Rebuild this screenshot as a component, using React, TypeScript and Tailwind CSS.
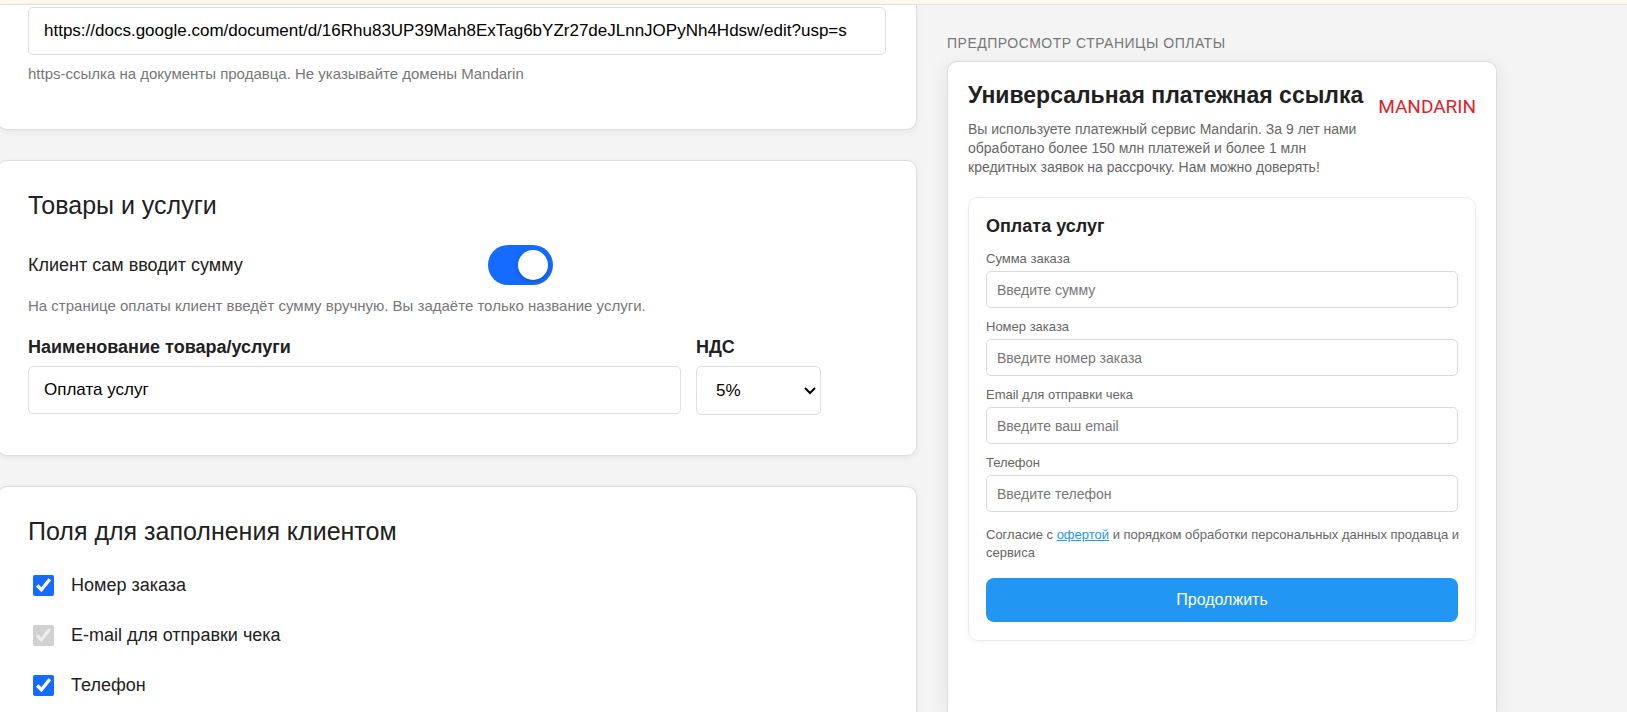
import { useState } from "react";
import type { ReactNode } from "react";

const clientFields = [
  { id: "order", label: "Номер заказа", disabled: false },
  { id: "email", label: "E-mail для отправки чека", disabled: true },
  { id: "phone", label: "Телефон", disabled: false },
];

const previewFields = [
  { id: "p-sum", label: "Сумма заказа", placeholder: "Введите сумму" },
  { id: "p-order", label: "Номер заказа", placeholder: "Введите номер заказа" },
  { id: "p-email", label: "Email для отправки чека", placeholder: "Введите ваш email" },
  { id: "p-phone", label: "Телефон", placeholder: "Введите телефон" },
];

const inputClass =
  "block h-12 w-full rounded-[5px] border border-[#dedede] bg-white px-[15px] text-[17px] text-black outline-none";

function Section({ title, className, children }: { title: string; className?: string; children: ReactNode }) {
  return (
    <section
      className={`border border-[#dedede] bg-white px-[30px] pt-[30px] shadow-[0_2px_6px_rgba(0,0,0,0.06)] ${className || ""}`}
    >
      <h2 className="text-[25px] leading-7">{title}</h2>
      {children}
    </section>
  );
}

export default function App() {
  const [docUrl, setDocUrl] = useState(
    "https://docs.google.com/document/d/16Rhu83UP39Mah8ExTag6bYZr27deJLnnJOPyNh4Hdsw/edit?usp=s",
  );
  const [itemName, setItemName] = useState("Оплата услуг");
  const [vat, setVat] = useState("5%");
  const [customSum, setCustomSum] = useState(true);

  return (
    <div className="flex min-h-screen flex-col overflow-hidden bg-[#f4f4f4] font-['Liberation_Sans',Arial,sans-serif] text-[#212121]">
      <header className="h-[5px] border-b border-[#f6dccf] bg-[#fff7f2]" />

      <main className="-ml-[3px] flex flex-1 gap-[30px] pr-[130px]">
        {/* Settings */}
        <div className="flex min-w-0 flex-1 flex-col gap-[30px]">
          <section className="rounded-b-[10px] border border-t-0 border-[#dedede] bg-white px-[30px] pt-[2px] pb-[45px] shadow-[0_2px_6px_rgba(0,0,0,0.06)]">
            <input
              aria-label="Ссылка на документы"
              className={inputClass}
              value={docUrl}
              onChange={(e) => setDocUrl(e.target.value)}
            />
            <p className="mt-[9px] text-[15px] leading-5 text-[#777]">
              https-ссылка на документы продавца. Не указывайте домены Mandarin
            </p>
          </section>

          <Section title="Товары и услуги" className="rounded-[10px] pb-10">
            <div className="mt-[26px] flex items-center">
              <label htmlFor="custom-sum" className="w-[460px] text-[18px]">
                Клиент сам вводит сумму
              </label>
              <input
                id="custom-sum"
                type="checkbox"
                role="switch"
                checked={customSum}
                onChange={(e) => setCustomSum(e.target.checked)}
                className="flex h-10 w-[65px] cursor-pointer appearance-none items-center rounded-full bg-[#ccc] p-[5px] before:size-[30px] before:rounded-full before:bg-white before:shadow-[0_2px_4px_rgba(0,0,0,0.2)] checked:justify-end checked:bg-[#156aff]"
              />
            </div>
            <p className="mt-[11px] text-[15px] leading-5 text-[#777]">
              На странице оплаты клиент введёт сумму вручную. Вы задаёте только название услуги.
            </p>

            <div className="mt-[19px] flex gap-[15px] pr-[65px] text-[18px]">
              <div className="flex-1">
                <label htmlFor="item-name" className="mb-[7px] block leading-6 font-bold">
                  Наименование товара/услуги
                </label>
                <input
                  id="item-name"
                  className={inputClass}
                  value={itemName}
                  onChange={(e) => setItemName(e.target.value)}
                />
              </div>
              <div className="w-[125px]">
                <label htmlFor="vat" className="mb-[7px] block leading-6 font-bold">
                  НДС
                </label>
                <div className="relative">
                  <select
                    id="vat"
                    value={vat}
                    onChange={(e) => setVat(e.target.value)}
                    className="block h-[49px] w-full appearance-none rounded-[5px] border border-[#dedede] bg-white pl-[19px] text-[17px] text-black"
                  >
                    <option>5%</option>
                    <option>10%</option>
                    <option>20%</option>
                  </select>
                  <svg
                    viewBox="0 0 12 8"
                    className="pointer-events-none absolute top-[21px] right-[5px] h-2 w-3"
                    fill="none"
                    stroke="#000"
                    strokeWidth="2"
                  >
                    <path d="M1 1l5 5 5-5" />
                  </svg>
                </div>
              </div>
            </div>
          </Section>

          <Section title="Поля для заполнения клиентом" className="flex-1 rounded-t-[10px] border-b-0">
            <div className="mt-[15px]">
              {clientFields.map((f) => (
                <label key={f.id} className="flex h-[50px] items-center gap-[17px] pl-[5px] text-[18px]">
                  <input
                    type="checkbox"
                    defaultChecked
                    disabled={f.disabled}
                    className="size-[21px] accent-[#156aff]"
                  />
                  {f.label}
                </label>
              ))}
            </div>
          </Section>
        </div>

        {/* Payment page preview */}
        <aside className="flex w-[550px] flex-col pt-7">
          <h2 className="text-[14px] leading-5 tracking-[0.5px] text-[#777] uppercase">
            Предпросмотр страницы оплаты
          </h2>
          <div className="mt-2 flex-1 rounded-t-[10px] border border-b-0 border-[#dcdcdc] bg-white px-5 pt-[19px] shadow-[0_4px_20px_rgba(0,0,0,0.08)]">
            <div className="flex gap-3">
              <div className="min-w-0 flex-1">
                <h1 className="text-[23px] leading-7 font-bold whitespace-nowrap">Универсальная платежная ссылка</h1>
                <p className="mt-[11px] text-[14px] leading-[19px] text-[#666]">
                  Вы используете платежный сервис Mandarin. За 9 лет нами обработано более 150 млн платежей и более 1
                  млн кредитных заявок на рассрочку. Нам можно доверять!
                </p>
              </div>
              <div className="mt-[14px] w-[100px] text-right font-[Roboto] text-[19px] leading-6 text-[#d8232a]">
                MANDARIN
              </div>
            </div>

            <form
              onSubmit={(e) => e.preventDefault()}
              className="mt-5 rounded-[10px] border border-[#ececec] px-[17px] pt-4 pb-[18px] shadow-[0_2px_6px_rgba(0,0,0,0.04)]"
            >
              <h3 className="mb-[13px] text-[18px] leading-6 font-bold">{itemName}</h3>
              <div className="space-y-[11px]">
                {previewFields.map((f) => (
                  <div key={f.id}>
                    <label htmlFor={f.id} className="mb-1 block text-[13px] leading-4 text-[#666]">
                      {f.label}
                    </label>
                    <input
                      id={f.id}
                      placeholder={f.placeholder}
                      className="block h-[37px] w-full rounded-[5px] border border-[#dadada] bg-white px-[10px] text-[14px] outline-none placeholder:text-[#777]"
                    />
                  </div>
                ))}
              </div>
              <p className="mt-[14px] -mr-2 text-[13px] leading-[18px] text-[#666]">
                Согласие с{" "}
                <a href="#offer" className="text-[#2196f3] underline">
                  офертой
                </a>{" "}
                и порядком обработки персональных данных продавца и сервиса
              </p>
              <button type="submit" className="mt-4 h-11 w-full rounded-lg bg-[#2196f3] text-[16px] text-white">
                Продолжить
              </button>
            </form>
          </div>
        </aside>
      </main>
    </div>
  );
}
